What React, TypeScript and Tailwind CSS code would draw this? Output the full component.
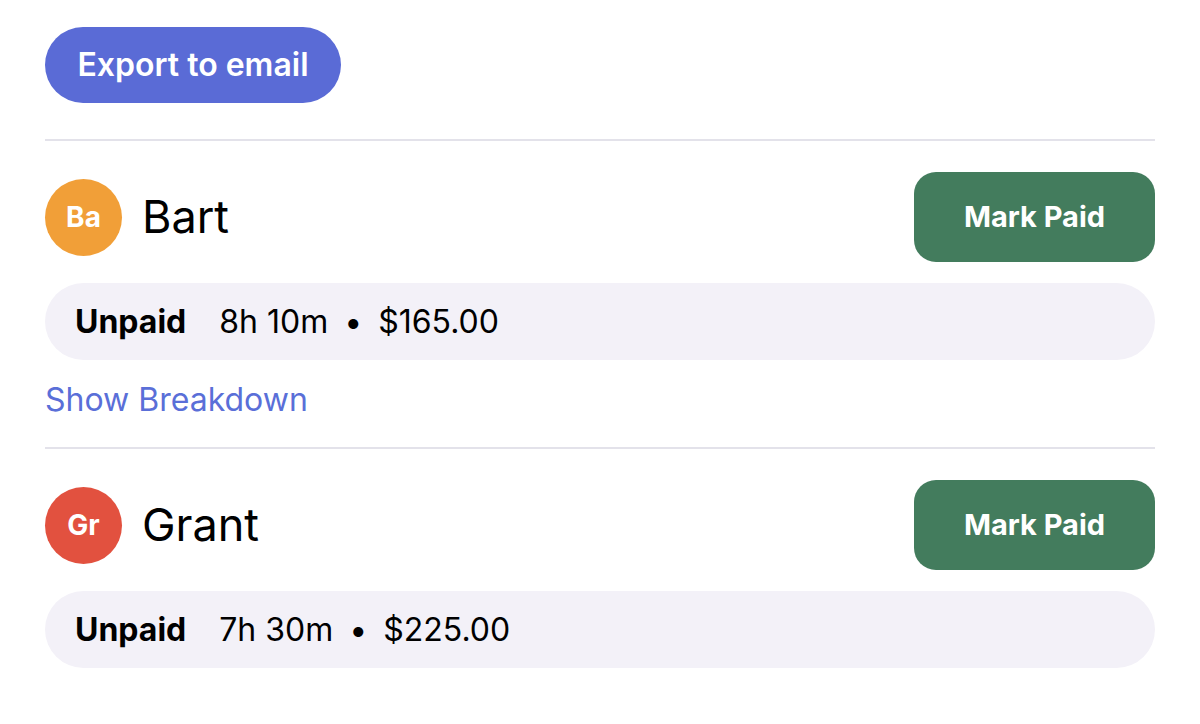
import React from "react";

type Person = {
  name: string;
  initials: string;
  color: string;
  hours: string;
  amount: string;
  breakdown: boolean;
};

const people: Person[] = [
  { name: "Bart", initials: "Ba", color: "bg-[#f19f38]", hours: "8h 10m", amount: "$165.00", breakdown: true },
  { name: "Grant", initials: "Gr", color: "bg-[#e2513f]", hours: "7h 30m", amount: "$225.00", breakdown: false },
];

function PersonRow({ p }: { p: Person }) {
  return (
    <div className="pt-[31px]">
      <div className="flex items-center justify-between">
        <div className="flex items-center gap-[20px]">
          <div
            className={`w-[77px] h-[77px] rounded-full ${p.color} flex items-center justify-center text-white text-[28px] font-bold`}
          >
            {p.initials}
          </div>
          <span className="text-[45px] text-black">{p.name}</span>
        </div>
        <button className="w-[241px] h-[90px] rounded-[22px] bg-[#437c5d] text-white text-[29px] font-bold">
          Mark Paid
        </button>
      </div>

      <div className="mt-[21px] h-[77px] rounded-full bg-[#f3f1f8] flex items-center px-[30px] text-[32px] text-black">
        <span className="font-bold">Unpaid</span>
        <span className="ml-[33px]">{p.hours}</span>
        <span className="mx-[16px]">•</span>
        <span>{p.amount}</span>
      </div>

      {p.breakdown && (
        <>
          <div className="mt-[20px] text-[32px] text-[#5a6fd8] leading-[40px]">Show Breakdown</div>
          <div className="mt-[27px] h-[2px] bg-[#e3e2ea]"></div>
        </>
      )}
    </div>
  );
}

export default function App() {
  return (
    <div className="min-h-screen bg-white px-[45px] pt-[27px]" style={{ fontFamily: "Inter, 'Noto Sans', sans-serif" }}>
      <button className="w-[296px] h-[76px] rounded-full bg-[#5a6bd6] text-white text-[32px] font-semibold">
        Export to email
      </button>

      <div className="mt-[36px] h-[2px] bg-[#e3e2ea]"></div>

      {people.map((p) => (
        <PersonRow key={p.name} p={p} />
      ))}
    </div>
  );
}
